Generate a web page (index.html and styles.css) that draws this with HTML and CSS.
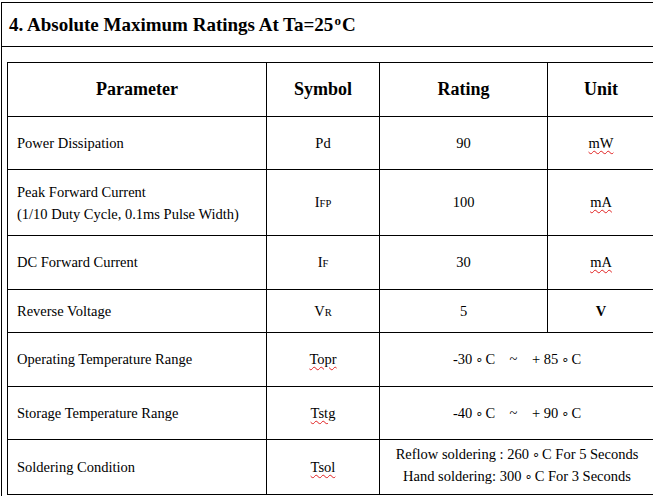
FILE: index.html
```html
<!DOCTYPE html>
<html>
<head>
<meta charset="utf-8">
<link rel="stylesheet" href="styles.css">
</head>
<body>
<div class="page">
  <div class="title">4. Absolute Maximum Ratings At Ta=25<span class="deg">o</span>C</div>
  <table class="ratings">
    <colgroup>
      <col class="c-param">
      <col class="c-sym">
      <col class="c-rating">
      <col class="c-unit">
    </colgroup>
    <tr class="r-head">
      <th>Parameter</th>
      <th>Symbol</th>
      <th>Rating</th>
      <th>Unit</th>
    </tr>
    <tr class="r-53">
      <td class="param">Power Dissipation</td>
      <td>Pd</td>
      <td>90</td>
      <td><span class="spell">mW</span></td>
    </tr>
    <tr class="r-66">
      <td class="param two">Peak Forward Current<br>(1/10 Duty Cycle, 0.1ms Pulse Width)</td>
      <td>I<span class="sub">FP</span></td>
      <td>100</td>
      <td><span class="spell">mA</span></td>
    </tr>
    <tr class="r-54">
      <td class="param">DC Forward Current</td>
      <td>I<span class="sub">F</span></td>
      <td>30</td>
      <td><span class="spell">mA</span></td>
    </tr>
    <tr class="r-43">
      <td class="param">Reverse Voltage</td>
      <td>V<span class="sub">R</span></td>
      <td>5</td>
      <td class="bold">V</td>
    </tr>
    <tr class="r-54">
      <td class="param">Operating Temperature Range</td>
      <td><span class="spell">Topr</span></td>
      <td colspan="2">-30<span class="ring">∘</span>C&nbsp;&nbsp;&nbsp;&nbsp;~&nbsp;&nbsp;&nbsp;&nbsp;+ 85<span class="ring">∘</span>C</td>
    </tr>
    <tr class="r-53">
      <td class="param">Storage Temperature Range</td>
      <td><span class="spell">Tstg</span></td>
      <td colspan="2">-40<span class="ring">∘</span>C&nbsp;&nbsp;&nbsp;&nbsp;~&nbsp;&nbsp;&nbsp;&nbsp;+ 90<span class="ring">∘</span>C</td>
    </tr>
    <tr class="r-55">
      <td class="param">Soldering Condition</td>
      <td><span class="spell">Tsol</span></td>
      <td colspan="2" class="two lift">Reflow soldering : 260<span class="ring">∘</span>C For 5 Seconds<br>Hand soldering: 300<span class="ring">∘</span>C For 3 Seconds</td>
    </tr>
  </table>
</div>
</body>
</html>
```

FILE: styles.css
```css
html, body {
  margin: 0;
  padding: 0;
  background: #fff;
}

body {
  font-family: "Liberation Serif", "Times New Roman", serif;
  color: #000;
  overflow: hidden;
}

.page {
  margin: 2px 0 0 1px;
  border-left: 1px solid #000;
  border-top: 1px solid #000;
  min-height: 494px;
}

.title {
  height: 43px;
  border-bottom: 1px solid #000;
  display: flex;
  align-items: center;
  padding-left: 7px;
  font-size: 19px;
  font-weight: bold;
  white-space: nowrap;
}

.deg {
  font-size: 13px;
  position: relative;
  top: -4px;
  margin: 0 1px;
}

.ratings {
  margin: 15px 0 0 5px;
  width: 647px;
  table-layout: fixed;
  border-collapse: collapse;
  font-size: 14.5px;
}

.c-param { width: 259px; }
.c-sym { width: 113px; }
.c-rating { width: 168px; }
.c-unit { width: 107px; }

.ratings th,
.ratings td {
  border: 1px solid #000;
  padding: 0;
  text-align: center;
  vertical-align: middle;
}

.ratings th {
  font-size: 18px;
  font-weight: bold;
}

.ratings td.param {
  text-align: left;
  padding-left: 9px;
}

.ratings td.two {
  line-height: 22px;
}

.ratings td.lift {
  padding-bottom: 4px;
}

.r-head { height: 54px; }
.r-53 { height: 53px; }
.r-66 { height: 66px; }
.r-54 { height: 54px; }
.r-43 { height: 43px; }
.r-55 { height: 55px; }

.sub {
  font-size: 10.5px;
}

.bold {
  font-weight: bold;
}

.spell {
  text-decoration: underline wavy #e02020;
  text-decoration-thickness: 1px;
  text-underline-offset: 2px;
}

.ring {
  font-family: "DejaVu Sans", sans-serif;
  font-size: 13px;
  line-height: 0;
  margin: 0 2px 0 3px;
}
```
